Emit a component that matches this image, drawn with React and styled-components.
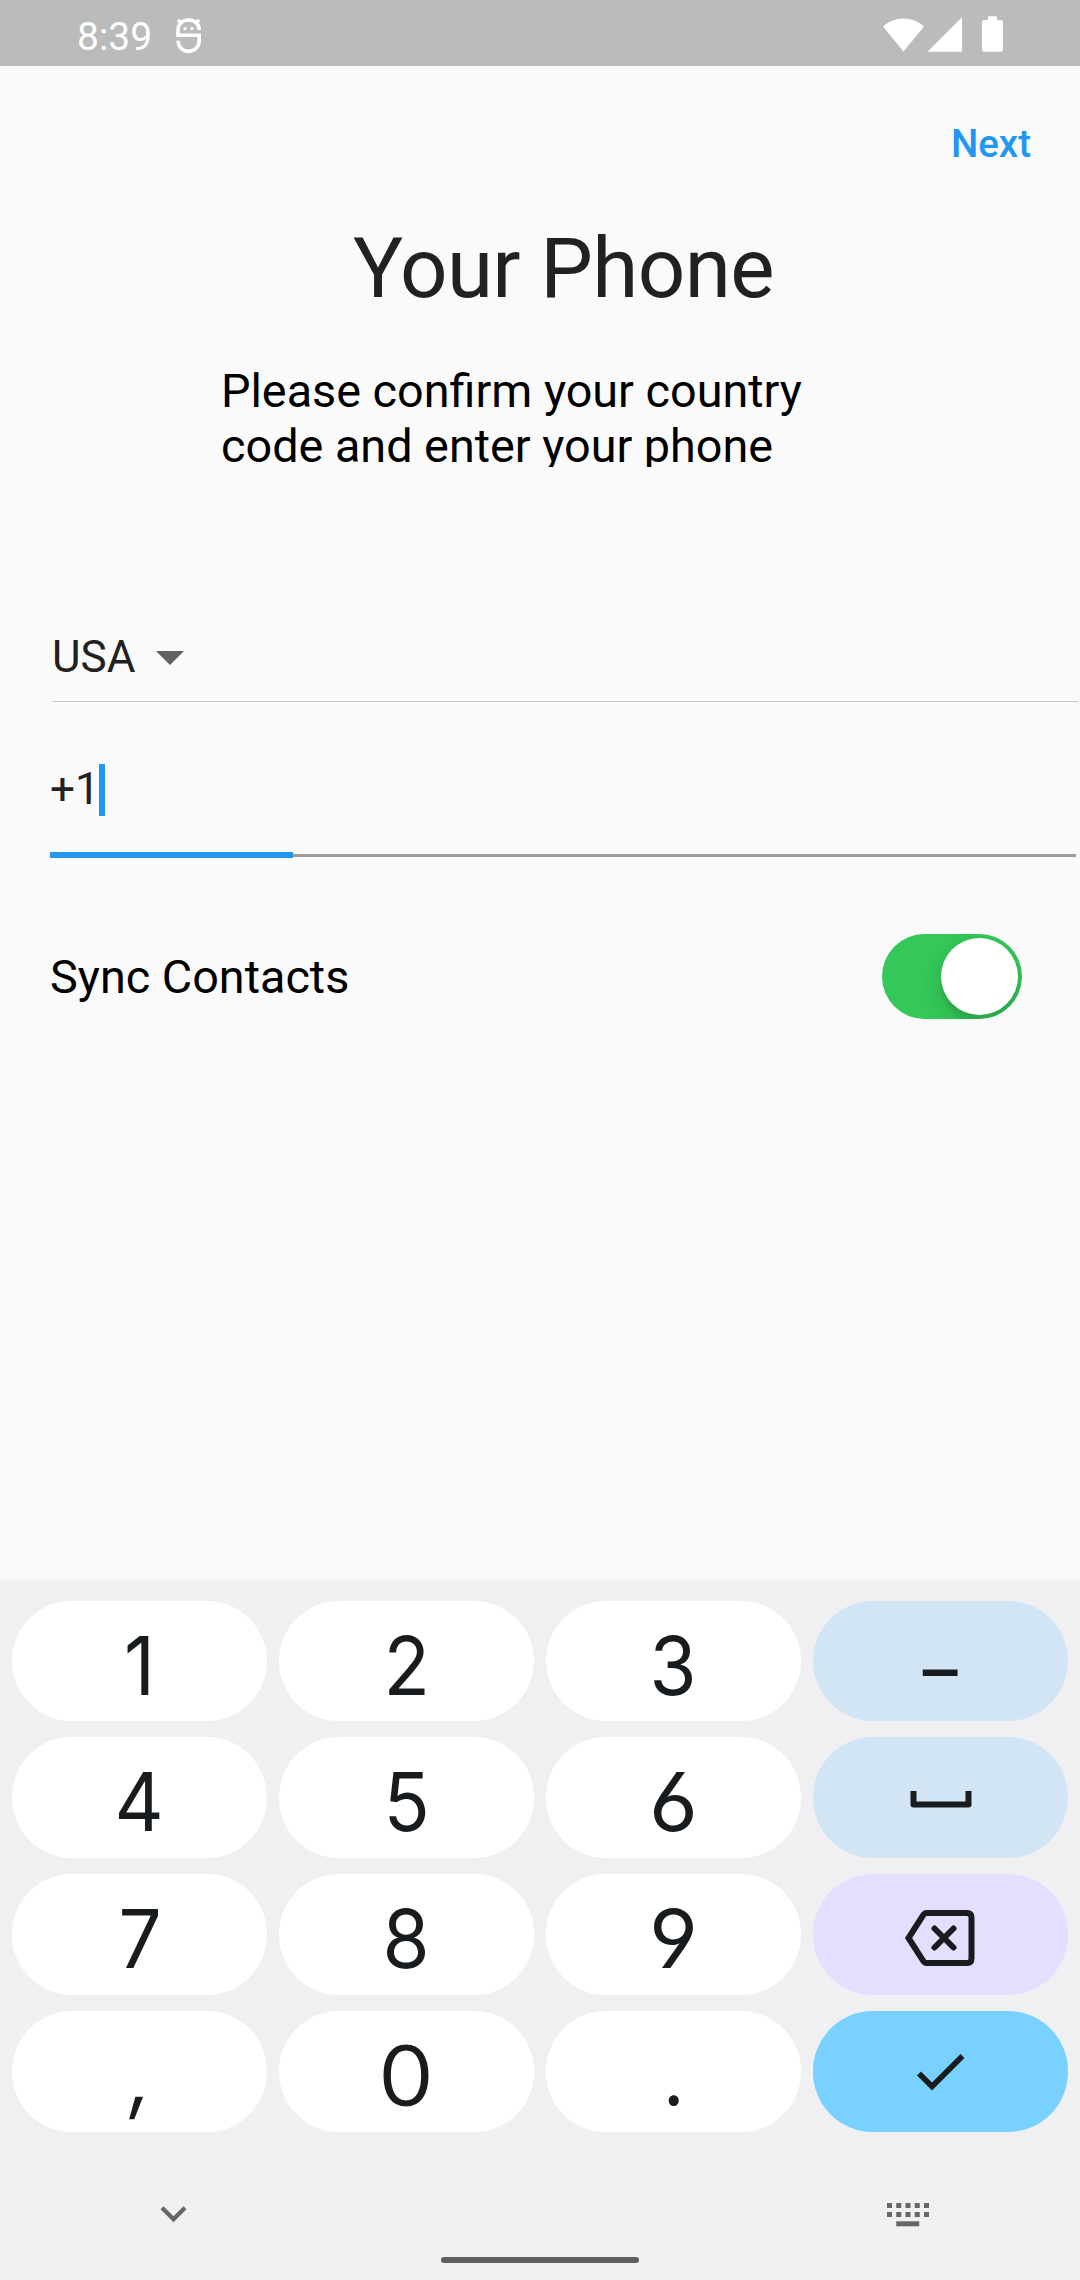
import React from "react";
import styled, { createGlobalStyle } from "styled-components";

const GlobalStyle = createGlobalStyle`
  *, *::before, *::after { box-sizing: border-box; }
  html, body { margin: 0; padding: 0; background: #fafafa; }
  button { border: 0; padding: 0; margin: 0; background: none; font: inherit; color: inherit; }
`;

const Screen = styled.div`
  width: 1080px;
  height: 2280px;
  display: flex;
  flex-direction: column;
  overflow: hidden;
  background: #fafafa;
  font-family: Roboto, "Liberation Sans", sans-serif;
  color: #212121;
`;

const StatusBar = styled.header`
  height: 66px;
  flex: none;
  display: flex;
  justify-content: space-between;
  align-items: flex-start;
  padding: 0 76px 0 77px;
  background: #bbbbbb;
  color: #fff;
`;

const StatusGroup = styled.div`
  display: flex;
  align-items: flex-start;
`;

const Clock = styled.span`
  width: 97px;
  padding-top: 14px;
  font-size: 39px;
  line-height: 46px;
  white-space: nowrap;
`;

const Glyph = styled.svg`
  display: block;
  flex: none;
  overflow: visible;
`;

const Page = styled.main`
  flex: 1;
  display: flex;
  flex-direction: column;
`;

const TopBar = styled.div`
  display: flex;
  justify-content: flex-end;
  height: 153px;
  padding: 55px 49px 0 0;
`;

const NextButton = styled.button`
  height: 46px;
  font-size: 38.5px;
  line-height: 46px;
  font-weight: 500;
  color: #2196f3;
`;

const Title = styled.h1`
  margin: 0 0 0 353px;
  font-size: 83.5px;
  line-height: 100px;
  font-weight: 400;
  letter-spacing: -0.6px;
  white-space: nowrap;
`;

const Hint = styled.p`
  width: 640px;
  height: 104px;
  margin: 44px 0 0 221px;
  padding-top: 1px;
  overflow: hidden;
  font-size: 46.75px;
  line-height: 55px;
  color: #000;
`;

const CountrySelect = styled.div`
  display: flex;
  align-items: center;
  gap: 21px;
  height: 72px;
  margin: 163px 2px 0 52px;
  padding: 0 0 17px;
  border-bottom: 1px solid #c8c8c8;
  font-size: 44px;
  line-height: 52px;

  svg {
    margin-top: 1px;
  }
`;

const PhoneField = styled.div`
  display: flex;
  flex-direction: column;
  height: 156px;
  margin: 61px 4px 0 50px;
`;

const PhoneValue = styled.div`
  display: flex;
  align-items: flex-start;
  height: 89px;
  font-size: 44px;
  line-height: 52px;
`;

const Caret = styled.span`
  width: 6px;
  height: 52px;
  margin: 1px 0 0 -1px;
  background: #2196f3;
`;

const Underline = styled.div`
  display: flex;
  align-items: center;
  height: 6px;

  &::before {
    content: "";
    width: 243px;
    height: 6px;
    background: #2196f3;
  }

  &::after {
    content: "";
    flex: 1;
    height: 3px;
    background: #9b9b9b;
  }
`;

const SyncRow = styled.div`
  display: flex;
  justify-content: space-between;
  align-items: center;
  height: 85px;
  margin-top: 15px;
  padding: 0 58px 0 50px;
  font-size: 46.75px;
  line-height: 54px;
  color: #000;
`;

const Toggle = styled.div`
  display: flex;
  justify-content: flex-end;
  align-items: center;
  width: 140px;
  height: 85px;
  padding: 4px;
  border-radius: 43px;
  overflow: hidden;
  background: #34c759;
`;

const Thumb = styled.div`
  width: 77px;
  height: 77px;
  border-radius: 50%;
  background: #fff;
  box-shadow: 0 8px 22px rgba(0, 0, 0, 0.15), 0 8px 3px rgba(0, 0, 0, 0.06);
`;

const Keyboard = styled.footer`
  flex: none;
  height: 699px;
  display: flex;
  flex-direction: column;
  background: #f0f0f2;
  padding-top: 20px;
  box-shadow: 0 0 7px rgba(0, 0, 0, 0.05);
`;

const KeyGrid = styled.div`
  display: grid;
  grid-template-columns: repeat(4, 255px);
  grid-template-rows: 120px 121px 121px 121px;
  gap: 16px 12px;
  justify-content: center;
`;

const tones = {
  plain: "#ffffff",
  soft: "#d2e5f4",
  remove: "#e4deff",
  accent: "#78d1ff",
};

const Key = styled.button`
  display: flex;
  justify-content: center;
  align-items: center;
  border-radius: 60px;
  background: ${(p) => tones[p.$tone]};
  color: #191c1e;
`;

const KeyLabel = styled.span`
  padding-top: ${(p) => p.$drop || 9}px;
  padding-left: ${(p) => p.$shift || 0}px;
  font-family: Inter, Roboto, sans-serif;
  font-size: 81px;
  font-weight: ${(p) => (p.$light ? 300 : 400)};
  -webkit-text-stroke: ${(p) => (p.$light ? "1.2px currentColor" : "0")};
  line-height: 100px;
  font-feature-settings: "cv03" 1, "cv04" 1;
  transform: scaleX(${(p) => p.$stretch || 0.94}) skewX(${(p) => p.$slant || 0}deg);
`;

const NavRow = styled.div`
  display: flex;
  justify-content: space-between;
  height: 60px;
  margin-top: 69px;
  padding: 0 151px 0 160px;
`;

const HomePill = styled.div`
  width: 198px;
  height: 6px;
  margin: -4px auto 0;
  border-radius: 3px;
  background: #606060;
`;

const SpaceIcon = () => (
  <Glyph width="62" height="16" viewBox="0 0 62 16" fill="none" stroke="currentColor" strokeWidth="6" strokeLinejoin="round">
    <path d="M3.500 1V14.500H58.500V1" />
  </Glyph>
);

const BackspaceIcon = () => (
  <Glyph width="72" height="50" viewBox="0 0 72 50" fill="none" stroke="currentColor" strokeWidth="6">
    <path d="M21.500 3H62Q66.500 3 66.500 7.500V48.500Q66.500 53 62 53H21.500Q19.500 53 18 50.500L3.500 28L18 5.500Q19.500 3 21.500 3Z" />
    <path d="M29.500 18.500L48.500 37.500M48.500 18.500L29.500 37.500" strokeLinecap="round" />
  </Glyph>
);

const CheckIcon = () => (
  <Glyph width="50" height="40" viewBox="0 0 50 40" fill="none" stroke="currentColor" strokeWidth="5.600">
    <path d="M3 21.500L16 34.500L46.500 4" />
  </Glyph>
);

const keys = [
  { label: "1" }, { label: "2" }, { label: "3" }, { label: "–", tone: "soft", stretch: 0.86, drop: 15 },
  { label: "4" }, { label: "5" }, { label: "6", stretch: 1.04 }, { icon: <SpaceIcon />, tone: "soft" },
  { label: "7" }, { label: "8" }, { label: "9", stretch: 1.04 }, { icon: <BackspaceIcon />, tone: "remove" },
  { label: ",", slant: -8, shift: 4 }, { label: "0", stretch: 1.1, light: true }, { label: "." }, { icon: <CheckIcon />, tone: "accent" },
];

const keypadDots = [0, 9.25, 18.5, 27.75, 37];

export default function App() {
  return (
    <>
      <GlobalStyle />
      <Screen>
        <StatusBar>
          <StatusGroup>
            <Clock>8:39</Clock>
            <Glyph width="30" height="56" viewBox="174 0 30 56" fill="none" stroke="#fff" strokeWidth="3.600">
              <path d="M199.200 30.300V29.500A10.600 9.500 0 0 0 178 29.500V35.200H199.200V40A10.600 11 0 0 1 178 40.800" />
              <path d="M178 20L182 23.500M199.200 20L195.200 23.500" />
              <circle cx="185" cy="28.600" r="1.700" fill="#fff" stroke="none" />
              <circle cx="192" cy="28.600" r="1.700" fill="#fff" stroke="none" />
            </Glyph>
          </StatusGroup>
          <Glyph width="121" height="56" viewBox="883 0 121 56" fill="#fff">
            <path d="M883 26.500A30 30 0 0 1 924 26.500L903.500 51.500Z" />
            <path d="M927.500 51.800H962V17.300Z" />
            <path d="M988 16.200H997V20H1001A2 2 0 0 1 1003 22V49.800A2 2 0 0 1 1001 51.800H984A2 2 0 0 1 982 49.800V22A2 2 0 0 1 984 20H988Z" />
          </Glyph>
        </StatusBar>
        <Page>
          <TopBar>
            <NextButton>Next</NextButton>
          </TopBar>
          <Title>Your Phone</Title>
          <Hint>
            Please confirm your country
            <br />
            code and enter your phone
          </Hint>
          <CountrySelect>
            <span>USA</span>
            <Glyph width="28" height="14" viewBox="0 0 28 14">
              <path d="M0 0H28L14 14Z" fill="#616161" />
            </Glyph>
          </CountrySelect>
          <PhoneField>
            <PhoneValue>
              +1
              <Caret />
            </PhoneValue>
            <Underline />
          </PhoneField>
          <SyncRow>
            <span>Sync Contacts</span>
            <Toggle>
              <Thumb />
            </Toggle>
          </SyncRow>
        </Page>
        <Keyboard>
          <KeyGrid>
            {keys.map((k, i) => (
              <Key key={i} $tone={k.tone || "plain"}>
                {k.icon || (
                  <KeyLabel
                    $stretch={k.stretch}
                    $drop={k.drop}
                    $slant={k.slant}
                    $shift={k.shift}
                    $light={k.light}
                  >
                    {k.label}
                  </KeyLabel>
                )}
              </Key>
            ))}
          </KeyGrid>
          <NavRow>
            <Glyph width="28" height="24" viewBox="0 0 28 24" fill="none" stroke="#666" strokeWidth="4.200">
              <path d="M2 6.700L13.500 18.200L25 6.700" />
            </Glyph>
            <Glyph width="42" height="26" viewBox="0 0 42 26" fill="#666">
              {keypadDots.map((x) => (
                <React.Fragment key={x}>
                  <rect x={x} y="2" width="5" height="5" />
                  <rect x={x} y="11" width="5" height="5" />
                </React.Fragment>
              ))}
              <rect x="9.250" y="20.300" width="23" height="5" />
            </Glyph>
          </NavRow>
          <HomePill />
        </Keyboard>
      </Screen>
    </>
  );
}
